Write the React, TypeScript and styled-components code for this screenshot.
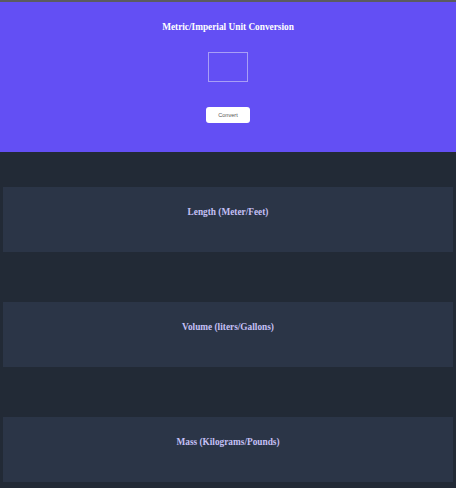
import React from "react";
import styled, { createGlobalStyle } from "styled-components";

const Global = createGlobalStyle`
  html, body { margin: 0; padding: 0; background: #222a36; }
  body { font-family: "Liberation Serif", "Times New Roman", serif; }
`;

const Page = styled.div`
  display: flex;
  flex-direction: column;
  border-top: 2px solid #5b5b5f;
  min-height: 486px;
  background: #222a36;
`;

const Header = styled.header`
  background: #634ff4;
  height: 150px;
  box-sizing: border-box;
  display: flex;
  flex-direction: column;
  align-items: center;
  padding-top: 19px;
`;

const Title = styled.h1`
  margin: 0;
  font-size: 9.3px;
  line-height: 12px;
  font-weight: bold;
  color: #ffffff;
`;

const Input = styled.input`
  margin-top: 19px;
  width: 40px;
  height: 30px;
  box-sizing: border-box;
  background: transparent;
  border: 1px solid #a89ef6;
  outline: none;
  padding: 0;
`;

const Button = styled.button`
  margin-top: 25px;
  width: 44px;
  height: 16px;
  border: none;
  border-radius: 3px;
  background: #ffffff;
  color: #555555;
  font-family: "Liberation Sans", Arial, sans-serif;
  font-size: 5.6px;
  padding: 0;
`;

const Main = styled.main`
  display: flex;
  flex-direction: column;
  gap: 50px;
  padding: 35px 3px 6px;
`;

const Card = styled.section`
  background: #2b3547;
  height: 65px;
  box-sizing: border-box;
  padding-top: 19px;
  display: flex;
  justify-content: center;
  align-items: flex-start;
`;

const CardTitle = styled.h2`
  margin: 0;
  font-size: 9.3px;
  line-height: 12px;
  font-weight: bold;
  color: #c5c0f6;
`;

const sections = [
  "Length (Meter/Feet)",
  "Volume (liters/Gallons)",
  "Mass (Kilograms/Pounds)",
];

export default function App() {
  return (
    <>
      <Global />
      <Page>
        <Header>
          <Title>Metric/Imperial Unit Conversion</Title>
          <Input type="text" />
          <Button>Convert</Button>
        </Header>
        <Main>
          {sections.map((s) => (
            <Card key={s}>
              <CardTitle>{s}</CardTitle>
            </Card>
          ))}
        </Main>
      </Page>
    </>
  );
}
